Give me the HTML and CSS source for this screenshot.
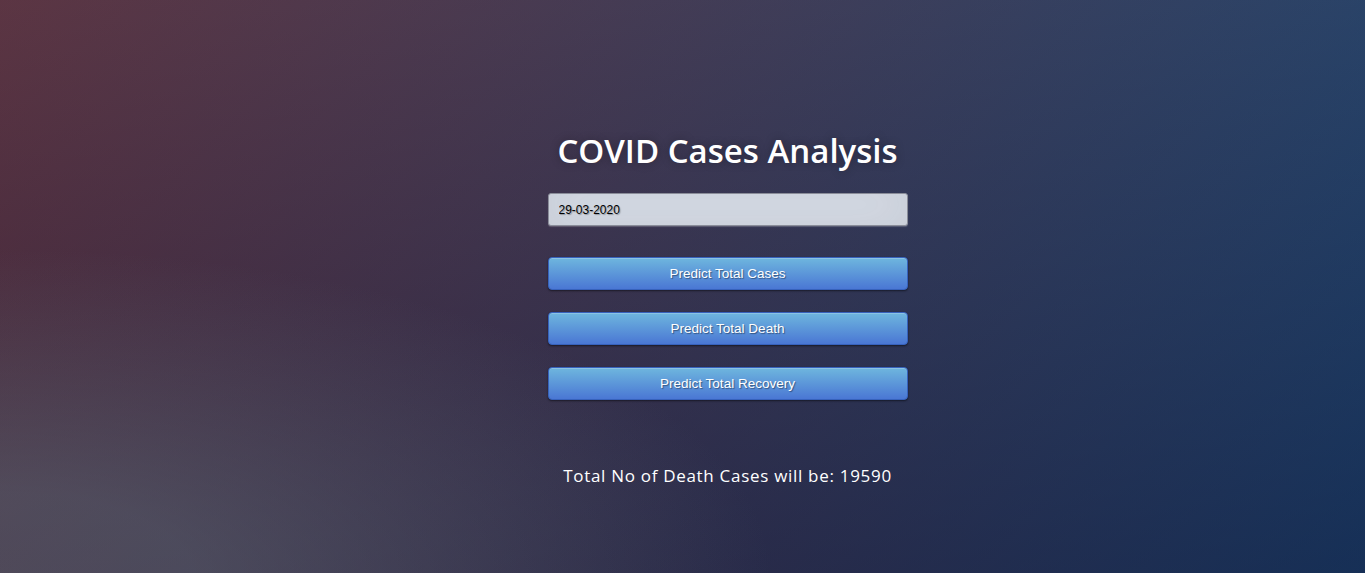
FILE: index.html
```html
<!DOCTYPE html>
<html>
<head>
<meta charset="utf-8">
<title>COVID Cases Analysis</title>
<link rel="stylesheet" href="styles.css">
</head>
<body>
<div class="login">
  <h1 class="title">COVID Cases Analysis</h1>
  <form class="form">
    <input class="date-input" type="text" value="29-03-2020">
    <button type="button" class="btn">Predict Total Cases</button>
    <button type="button" class="btn">Predict Total Death</button>
    <button type="button" class="btn">Predict Total Recovery</button>
  </form>
  <p class="result">Total No of Death Cases will be: 19590</p>
</div>
</body>
</html>
```
FILE: styles.css
```css
html { height: 100%; }
body {
  margin: 0;
  min-height: 100%;
  font-family: "Open Sans", sans-serif;
  background: #092756;
  background:
    radial-gradient(ellipse farthest-corner at 0% 100%, rgba(104,128,138,.4) 10%, rgba(138,114,76,0) 40%),
    linear-gradient(to bottom, rgba(57,173,219,.25) 0%, rgba(42,60,87,.4) 100%),
    linear-gradient(135deg, #670d10 0%, #092756 100%);
  overflow: hidden;
}
.login {
  width: 360px;
  margin-left: calc(50% - 135px);
  padding-top: 127px;
  box-sizing: border-box;
  height: 573px;
}
.title {
  margin: 0 -40px;
  color: #fff;
  font-size: 33px;
  font-weight: 600;
  letter-spacing: 0;
  text-align: center;
  white-space: nowrap;
  line-height: 48px;
  text-shadow: 0 0 10px rgba(0,0,0,0.3);
}
.form {
  display: flex;
  flex-direction: column;
  gap: 22px;
  margin-top: 18px;
}
.date-input {
  box-sizing: border-box;
  width: 100%;
  height: 33px;
  margin: 0 0 9px 0;
  padding: 0 10px;
  font-family: "Liberation Sans", Arial, sans-serif;
  font-size: 12px;
  color: #000;
  background: #d9dfea;
  border: 1px solid #8a8d99;
  border-radius: 3px;
  outline: none;
  text-shadow: 1px 1px 1px rgba(0,0,0,0.3);
  box-shadow: inset 0 -5px 45px rgba(100,100,100,0.15), 0 1px 1px rgba(255,255,255,0.2);
}
.btn {
  box-sizing: border-box;
  display: block;
  width: 100%;
  height: 33px;
  padding: 0 14px;
  font-family: "Liberation Sans", Arial, sans-serif;
  font-size: 13.5px;
  color: #fff;
  text-align: center;
  background-color: #4a77d4;
  background-image: linear-gradient(to bottom, #6eb6de, #4a77d4);
  border: 1px solid #3762bc;
  border-radius: 4px;
  text-shadow: 1px 1px 1px rgba(0,0,0,0.4);
  box-shadow: inset 0 1px 0 rgba(255,255,255,0.2), 0 1px 2px rgba(0,0,0,0.5);
  cursor: pointer;
}
.result {
  margin: 64px 0 0 0;
  color: #fff;
  font-size: 17px;
  letter-spacing: 0.7px;
  text-align: center;
  line-height: 24px;
}
```
